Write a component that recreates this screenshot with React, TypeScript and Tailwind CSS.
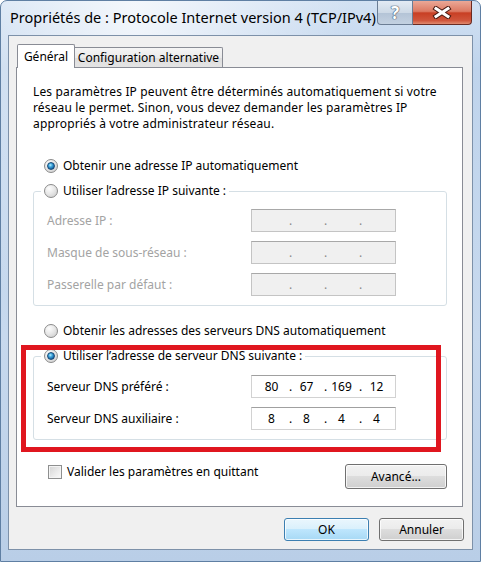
import React from "react";
import clsx from "clsx";

type RadioProps = { checked?: boolean };

const Radio = ({ checked }: RadioProps) => (
  <span className="flex h-[14px] w-[14px] shrink-0 items-center justify-center rounded-full border border-[#8b8b8b] bg-[radial-gradient(circle_at_35%_30%,#fdfdfd_0%,#e8e8e8_45%,#c8c8c8_100%)]">
    {checked ? (
      <span className="h-[8px] w-[8px] rounded-full border border-[#1a4a76] bg-[radial-gradient(circle_at_40%_35%,#b8eeff_0%,#3ea6dc_35%,#0f5596_80%,#0b3f70_100%)]" />
    ) : null}
  </span>
);

type IpFieldProps = { parts?: string[]; disabled?: boolean };

const IpField = ({ parts, disabled }: IpFieldProps) => {
  const segs = parts ?? ["", "", "", ""];
  return (
    <div
      className={clsx(
        "flex h-[23px] w-[145px] shrink-0 items-center border pl-[5px]",
        disabled
          ? "border-[#c4c4c4] border-t-[#a8a8a8] bg-[#f0f0f0] text-[#8a8a8a]"
          : "border-[#d2d2d2] border-t-[#a0a0a0] bg-white text-black"
      )}
    >
      {segs.map((s, i) => (
        <React.Fragment key={i}>
          <span className="w-[29px] text-center">{s}</span>
          {i < 3 ? <span className="w-[6px] pl-[3px]">.</span> : null}
        </React.Fragment>
      ))}
    </div>
  );
};

type FieldRowProps = { label: string; disabled?: boolean; parts?: string[] };

const FieldRow = ({ label, disabled, parts }: FieldRowProps) => (
  <div className="flex items-center">
    <span className={clsx("w-[210px] pl-[6px]", disabled ? "text-[#a3a3a3]" : "text-black")}>
      {label}
    </span>
    <IpField parts={parts} disabled={disabled} />
  </div>
);

type ButtonProps = { label: string; isDefault?: boolean; className?: string };

const WinButton = ({ label, isDefault, className }: ButtonProps) => (
  <button
    className={clsx(
      "flex items-center justify-center rounded-[3px] border text-black shadow-[inset_0_0_0_1px_rgba(255,255,255,0.75)]",
      isDefault
        ? "border-[#3c7fb1] bg-[linear-gradient(#eaf6fd_0%,#d9f0fc_50%,#bee6fd_50%,#a7d9f5_100%)]"
        : "border-[#707070] bg-[linear-gradient(#f2f2f2_0%,#ebebeb_50%,#dddddd_50%,#cfcfcf_100%)]",
      className
    )}
  >
    {label}
  </button>
);

export default function App() {
  return (
    <div className="relative flex h-[562px] w-[481px] flex-col overflow-hidden rounded-t-[7px] border border-[#5f7fa3] bg-[radial-gradient(ellipse_at_28%_2%,rgba(255,255,255,0.75)_0%,rgba(255,255,255,0)_45%),linear-gradient(180deg,#d2e1f3_0%,#bfd4ec_12%,#c7d9ee_60%,#b9cee7_100%)] font-['Noto_Sans',sans-serif] text-[12px] leading-[16px] text-black">
      {/* title bar */}
      <div className="flex h-[34px] shrink-0 items-start">
        <div className="pl-[9px] pt-[6px] text-[14.5px] leading-[20px] text-black">
          Propriétés de : Protocole Internet version 4 (TCP/IPv4)
        </div>
        <div className="ml-auto mr-[8px] flex">
          <div className="flex h-[24px] w-[36px] items-center justify-center rounded-bl-[4px] border border-t-0 border-[#6b7d94] bg-[linear-gradient(#e3ebf4_0%,#cdd9e6_50%,#b3c3d6_51%,#c3d1e1_100%)] text-[17px] font-bold text-white [text-shadow:0_0_1px_#3f4f66,0_0_1px_#3f4f66,0_0_1px_#3f4f66]">
            ?
          </div>
          <div className="flex h-[24px] w-[59px] items-center justify-center rounded-br-[4px] border border-l-0 border-t-0 border-[#6a2b22] bg-[linear-gradient(#eba897_0%,#dc7a63_45%,#c83f24_52%,#d0563c_85%,#e08a6f_100%)]">
            <svg width="20" height="13" viewBox="0 0 20 13">
              <path d="M4 2.5 L16 10.5 M16 2.5 L4 10.5" stroke="#4a1a12" strokeWidth="5" strokeLinecap="square" />
              <path d="M4 2.5 L16 10.5 M16 2.5 L4 10.5" stroke="#ffffff" strokeWidth="3" strokeLinecap="square" />
            </svg>
          </div>
        </div>
      </div>

      {/* client area */}
      <div className="mx-[7px] flex h-[515px] flex-col border border-[#7d91a9] bg-[#f0f0f0] pl-[7px] pr-[9px] pt-[8px]">
        <div className="relative z-10 -mb-[1px] flex h-[24px] items-end pl-[1px]">
          <div className="flex h-[24px] w-[58px] items-center justify-center rounded-t-[2px] border border-b-0 border-[#898c95] bg-white">
            Général
          </div>
          <div className="mb-[1px] flex h-[20px] w-[148px] items-center justify-center rounded-tr-[2px] border border-b-0 border-l-0 border-[#898c95] bg-[linear-gradient(#f5f5f5_0%,#ebebeb_50%,#dedede_51%,#e4e4e4_100%)]">
            Configuration alternative
          </div>
        </div>

        <div className="flex h-[440px] flex-col border border-[#898c95] bg-white pl-[16px] pr-[15px] pt-[16px]">
          <p className="tracking-[0.15px]">
            Les paramètres IP peuvent être déterminés automatiquement si votre
            <br />
            réseau le permet. Sinon, vous devez demander les paramètres IP
            <br />
            appropriés à votre administrateur réseau.
          </p>

          <div className="mt-[26px] flex h-[16px] items-center gap-[5px] pl-[11px]">
            <Radio checked />
            <span>Obtenir une adresse IP automatiquement</span>
          </div>

          <fieldset className="mt-[9px] rounded-[3px] border border-[#d5dfe5] pb-[9px] pl-[7px]">
            <legend className="flex h-[16px] items-center gap-[5px] px-[3px]">
              <Radio />
              <span>Utiliser l’adresse IP suivante :</span>
            </legend>
            <div className="flex flex-col gap-[9px] pt-[10px]">
              <FieldRow label="Adresse IP :" disabled />
              <FieldRow label="Masque de sous-réseau :" disabled />
              <FieldRow label="Passerelle par défaut :" disabled />
            </div>
          </fieldset>

          <div className="mt-[17px] flex h-[16px] items-center gap-[5px] pl-[11px]">
            <Radio />
            <span>Obtenir les adresses des serveurs DNS automatiquement</span>
          </div>

          <fieldset className="mt-[9px] rounded-[3px] border border-[#d5dfe5] pb-[9px] pl-[7px]">
            <legend className="flex h-[16px] items-center gap-[5px] px-[3px]">
              <Radio checked />
              <span>Utiliser l’adresse de serveur DNS suivante :</span>
            </legend>
            <div className="flex flex-col gap-[9px] pt-[11px]">
              <FieldRow label="Serveur DNS préféré :" parts={["80", "67", "169", "12"]} />
              <FieldRow label="Serveur DNS auxiliaire :" parts={["8", "8", "4", "4"]} />
            </div>
          </fieldset>

          <div className="mt-[24px] flex items-start">
            <span className="ml-[15px] mt-[1px] h-[14px] w-[14px] border border-[#8e8f8f] bg-[linear-gradient(135deg,#d3d3d3_0%,#ececec_60%,#fafafa_100%)] shadow-[inset_0_0_0_1px_#f4f4f4]" />
            <span className="ml-[5px]">Valider les paramètres en quittant</span>
            <WinButton label="Avancé..." className="ml-auto h-[25px] w-[102px]" />
          </div>
        </div>

        <div className="-mr-[1px] mt-[11px] flex justify-end gap-[10px]">
          <WinButton label="OK" isDefault className="h-[23px] w-[85px]" />
          <WinButton label="Annuler" className="h-[23px] w-[85px]" />
        </div>
      </div>

      {/* red highlight drawn over the DNS group */}
      <div className="pointer-events-none absolute left-[20px] top-[344px] h-[107px] w-[420px] border-[5px] border-[#e0161f]" />
    </div>
  );
}
